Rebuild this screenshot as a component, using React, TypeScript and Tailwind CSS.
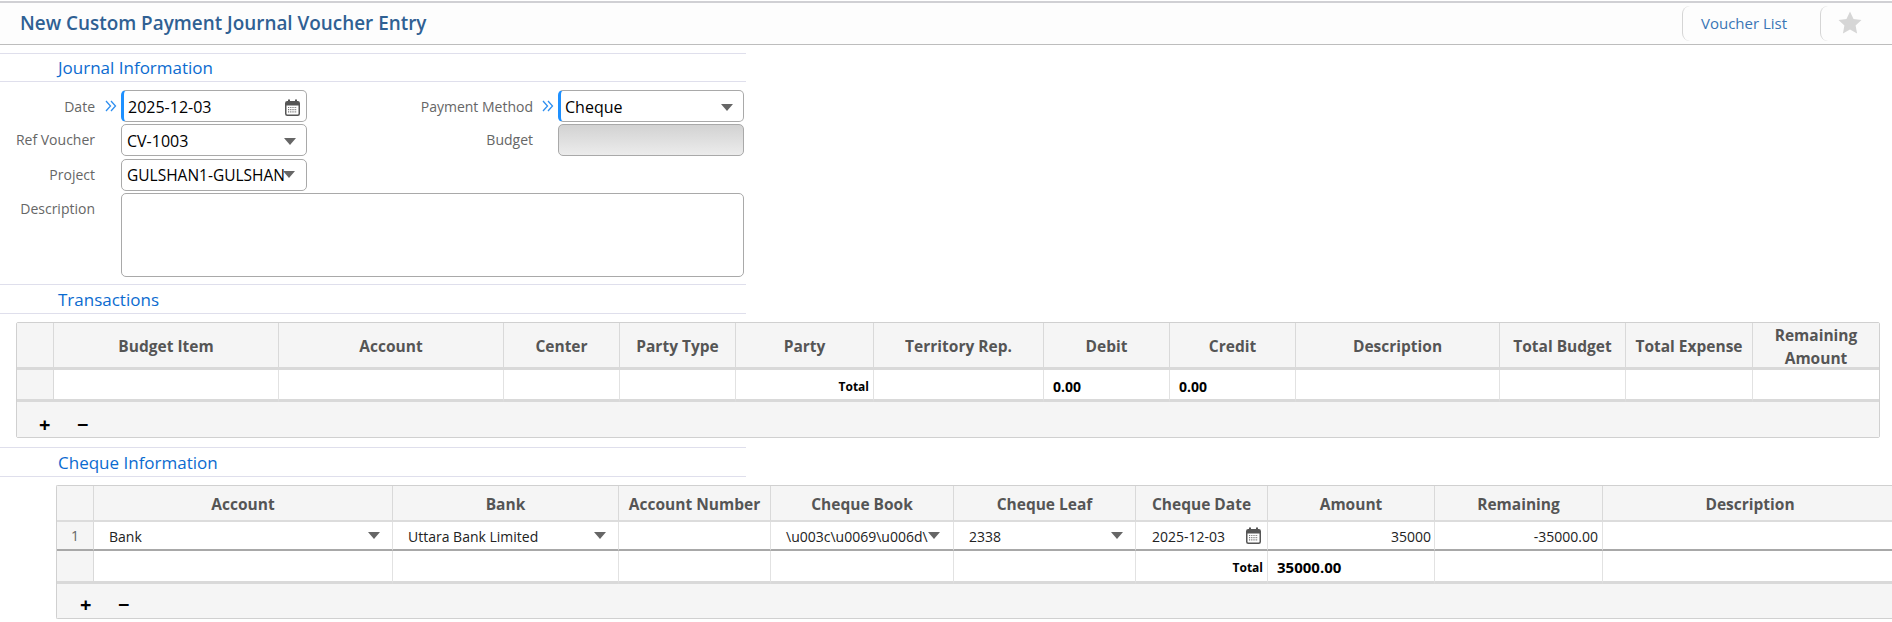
import React from "react";

const Caret = () => (
  <svg width="12" height="7" viewBox="0 0 12 7" className="shrink-0">
    <path d="M0 0h12L6 7z" fill="#666" />
  </svg>
);

const Calendar = () => (
  <svg width="15" height="17" viewBox="0 0 15 17" className="shrink-0">
    <rect x="0.75" y="2.75" width="13.5" height="13.5" rx="1.5" fill="#fff" stroke="#555" strokeWidth="1.5" />
    <rect x="1" y="3" width="13" height="3.5" fill="#555" />
    <rect x="3" y="0.5" width="2" height="4" fill="#555" />
    <rect x="10" y="0.5" width="2" height="4" fill="#555" />
    <path d="M3 8.500h9M3 10.700h9M3 12.900h9" stroke="#777" strokeWidth="1.2" strokeDasharray="1.2 1" />
  </svg>
);

const Chevrons = () => (
  <svg width="12" height="12" viewBox="0 0 12 12" className="block">
    <path d="M1 1l4.500 5L1 11M6 1l4.500 5L6 11" fill="none" stroke="#2f8ff0" strokeWidth="1.3" />
  </svg>
);

const Section = ({ title, h }: { title: string; h: string }) => (
  <div className={`w-[746px] ${h} border-y border-[#dfdfec] pl-[58px] flex items-center text-[17px] leading-none text-[#0b6bd0]`}>
    {title}
  </div>
);

const Label = ({ children, up }: { children: React.ReactNode; up?: boolean }) => (
  <div className={`h-[32px] flex items-center justify-end text-[14px] text-[#666] ${up ? "pb-[1px]" : ""}`}>{children}</div>
);

const Box = ({ children, required, className = "" }: { children?: React.ReactNode; required?: boolean; className?: string }) => (
  <div
    className={`h-[32px] rounded-[5px] border border-[#a9a9a9] flex items-center justify-between pr-[6px] pt-[2px] text-[16px] text-black ${
      required ? "border-l-[3px] border-l-[#1e90ff] pl-[4px]" : "pl-[5px]"
    } ${className}`}
  >
    {children}
  </div>
);

const Th = ({ children, className = "" }: { children?: React.ReactNode; className?: string }) => (
  <th className={`bg-[#f5f5f5] border-r border-[#d9d9d9] text-center align-middle text-[15.5px] leading-[23px] font-bold text-[#555] px-0 pb-0 ${className}`}>
    {children}
  </th>
);

const Td = ({ children, className = "" }: { children?: React.ReactNode; className?: string }) => (
  <td className={`border-r border-[#e2e2e2] px-0 pb-0 text-[14px] text-[#222] overflow-hidden ${className}`}>{children}</td>
);

const Toolbar = ({ className }: { className: string }) => (
  <div className={`bg-[#f5f5f5] flex items-center font-bold text-black text-[20px] leading-none ${className}`}>
    <span className="w-[38px]">+</span>
    <span>−</span>
  </div>
);

const w1 = ["w-[37px]", "w-[225px]", "w-[225px]", "w-[116px]", "w-[116px]", "w-[138px]", "w-[170px]", "w-[126px]", "w-[126px]", "w-[204px]", "w-[126px]", "w-[127px]", "w-[126px]"];
const h1 = ["", "Budget Item", "Account", "Center", "Party Type", "Party", "Territory Rep.", "Debit", "Credit", "Description", "Total Budget", "Total Expense", "Remaining Amount"];
const w2 = ["w-[37px]", "w-[299px]", "w-[226px]", "w-[152px]", "w-[183px]", "w-[182px]", "w-[132px]", "w-[167px]", "w-[168px]", "w-[295px]"];
const h2 = ["", "Account", "Bank", "Account Number", "Cheque Book", "Cheque Leaf", "Cheque Date", "Amount", "Remaining", "Description"];

const SelectCell = ({ text }: { text: string }) => (
  <div className="flex items-center justify-between pl-[15px] pr-[12px]">
    <span className="truncate pt-[1px]">{text}</span>
    <Caret />
  </div>
);

const rowLine = "border-b-2 border-b-[#a8a8a8] pt-0";

export default function App() {
  return (
    <div className="w-full h-[622px] overflow-hidden bg-white font-['Open_Sans','Noto_Sans',sans-serif]">
      <header className="h-[44px] mt-[1px] border-y border-t-2 border-t-[#d0d0d4] border-b-[#bdbdbd] bg-[#fdfdfd] flex items-center justify-between pl-[20px]">
        <h1 className="text-[18.9px] font-semibold text-[#2f6093]">New Custom Payment Journal Voucher Entry</h1>
        <div className="flex items-center h-[35px]">
          <div className="w-[138px] h-full rounded-l-[8px] border-l border-[#d5d5d5] pl-[18px] flex items-center text-[15px] text-[#3a76b5]">
            Voucher List
          </div>
          <div className="w-[72px] h-full rounded-l-[8px] border-l border-[#d5d5d5] pl-[17px] flex items-center">
            <svg width="24" height="23" viewBox="0 0 24 23" className="mb-[3px]">
              <path d="M12 0.500l3.500 7.400 8 1-5.900 5.600 1.500 8L12 18.600 4.900 22.500l1.500-8L.5 8.900l8-1z" fill="#d6d6d6" />
            </svg>
          </div>
        </div>
      </header>

      <div className="mt-[8px]">
        <Section title="Journal Information" h="h-[29px]" />
      </div>

      <form className="pt-[8px] w-[746px] grid grid-cols-[95px_26px_186px_226px_25px_186px] auto-rows-min">
        <Label>Date</Label>
        <div className="flex items-center justify-end pr-[4px]"><Chevrons /></div>
        <Box required>
          <span>2025-12-03</span>
          <Calendar />
        </Box>
        <Label>Payment Method</Label>
        <div className="flex items-center justify-end pr-[4px]"><Chevrons /></div>
        <Box required>
          <span>Cheque</span>
          <span className="pr-[4px]"><Caret /></span>
        </Box>

        <div className="col-span-6 h-[2px]" />

        <Label up>Ref Voucher</Label>
        <div />
        <Box>
          <span>CV-1003</span>
          <span className="pr-[4px]"><Caret /></span>
        </Box>
        <Label up>Budget</Label>
        <div />
        <div className="h-[32px] rounded-[5px] border border-[#a9a9a9] bg-gradient-to-b from-[#d2d2d2] to-[#ececec]" />

        <div className="col-span-6 h-[3px]" />

        <Label up>Project</Label>
        <div />
        <Box className="relative pr-0">
          <span className="block w-[160px] whitespace-nowrap text-[15.5px]">GULSHAN1-GULSHAN</span>
          <span className="absolute right-[11px] top-[11px]"><Caret /></span>
        </Box>
        <div className="col-span-3" />

        <div className="col-span-6 h-[2px]" />

        <Label up>Description</Label>
        <div />
        <div className="col-span-4 h-[84px] rounded-[5px] border border-[#a9a9a9]" />
      </form>

      <div className="mt-[7px]">
        <Section title="Transactions" h="h-[30px]" />
      </div>

      <div className="mt-[8px] ml-[16px] w-[1864px] border border-[#d0d0d0] rounded-[2px]">
        <table className="table-fixed w-full border-separate border-spacing-0">
          <colgroup>{w1.map((c, i) => <col key={i} className={c} />)}</colgroup>
          <thead>
            <tr className="h-[47px]">
              {h1.map((t, i) => (
                <Th key={i} className={`border-b-[3px] border-b-[#d9d9d9] pt-[3px] ${i === 12 ? "border-r-0" : ""}`}>
                  <div className="-my-[3px]">{t}</div>
                </Th>
              ))}
            </tr>
          </thead>
          <tbody>
            <tr className="h-[32px]">
              {h1.map((_, i) => (
                <Td key={i} className={`border-b-[3px] border-b-[#d9d9d9] pt-[4px] ${i === 0 ? "bg-[#f5f5f5] border-r-[#d9d9d9]" : ""} ${i === 12 ? "border-r-0" : ""}`}>
                  {i === 5 && <div className="text-right pr-[4px] text-[12px] font-bold text-black">Total</div>}
                  {(i === 7 || i === 8) && <div className="pl-[9px] font-bold text-black">0.00</div>}
                </Td>
              ))}
            </tr>
          </tbody>
        </table>
        <Toolbar className="h-[35px] pt-[10px] pl-[22px]" />
      </div>

      <div className="mt-[9px]">
        <Section title="Cheque Information" h="h-[30px]" />
      </div>

      <div className="mt-[8px] ml-[56px] w-[1842px] border-y border-l border-[#d0d0d0] rounded-l-[2px]">
        <table className="table-fixed w-full border-separate border-spacing-0">
          <colgroup>{w2.map((c, i) => <col key={i} className={c} />)}</colgroup>
          <thead>
            <tr className="h-[36px]">
              {h2.map((t, i) => (
                <Th key={i} className="border-b-2 border-b-[#dcdcdc] pt-[2px]">{t}</Th>
              ))}
            </tr>
          </thead>
          <tbody>
            <tr className="h-[29px]">
              <Td className={`bg-[#f5f5f5] ${rowLine} border-r-[#d9d9d9] text-center text-[#666]`}>1</Td>
              <Td className={rowLine}><SelectCell text="Bank" /></Td>
              <Td className={rowLine}><SelectCell text="Uttara Bank Limited" /></Td>
              <Td className={rowLine} />
              <Td className={rowLine}>
                <div className="flex items-center pl-[15px] pr-[8px]">
                  <span className="w-[143px] whitespace-nowrap shrink-0 pt-[1px]">{"\\u003c\\u0069\\u006d\\"}</span>
                  <span className="-ml-[1px]"><Caret /></span>
                </div>
              </Td>
              <Td className={rowLine}><SelectCell text="2338" /></Td>
              <Td className={rowLine}>
                <div className="flex items-center justify-between pl-[16px] pr-[6px]">
                  <span className="pt-[1px]">2025-12-03</span>
                  <Calendar />
                </div>
              </Td>
              <Td className={`${rowLine} text-right pr-[3px]`}><div className="pt-[1px]">35000</div></Td>
              <Td className={`${rowLine} text-right pr-[4px]`}><div className="pt-[1px]">-35000.00</div></Td>
              <Td className={rowLine} />
            </tr>
            <tr className="h-[33px]">
              {h2.map((_, i) => (
                <Td key={i} className={`border-b-[3px] border-b-[#d9d9d9] pt-[3px] ${i === 0 ? "bg-[#f5f5f5] border-r-[#d9d9d9]" : ""}`}>
                  {i === 6 && <div className="text-right pr-[4px] text-[12px] font-bold text-black">Total</div>}
                  {i === 7 && <div className="pl-[9px] text-[15px] font-bold text-black">35000.00</div>}
                </Td>
              ))}
            </tr>
          </tbody>
        </table>
        <Toolbar className="h-[34px] pt-[8px] pl-[23px]" />
      </div>
    </div>
  );
}
